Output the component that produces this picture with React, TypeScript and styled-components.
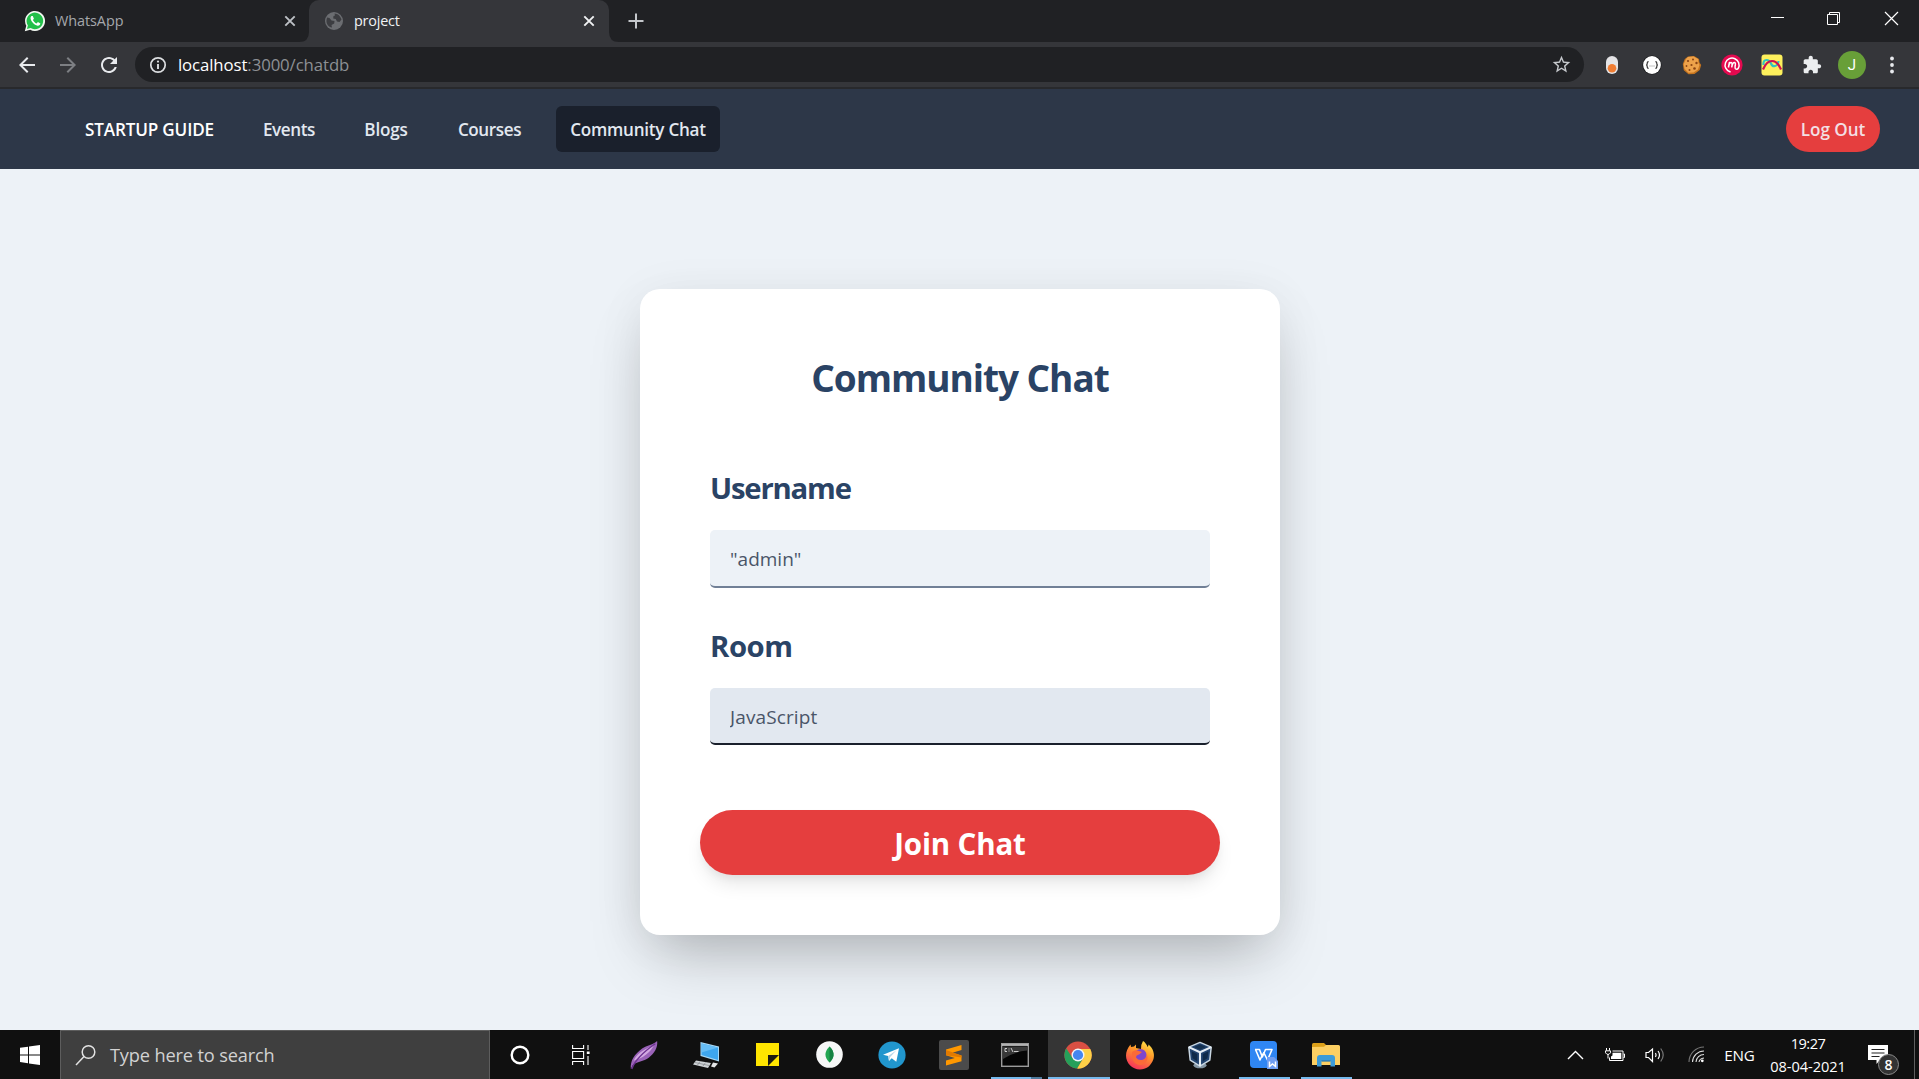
import React from "react";
import styled, { createGlobalStyle } from "styled-components";

const Global = createGlobalStyle`
  * { box-sizing: border-box; }
  html, body { margin: 0; padding: 0; overflow: hidden; }
  body { font-family: "Open Sans", "Noto Sans", sans-serif; }
  svg { display: block; flex: none; }
  button, input { font-family: inherit; border: 0; padding: 0; margin: 0; outline: none; }
`;

const Screen = styled.div`
  width: 1919px;
  height: 1079px;
  display: flex;
  flex-direction: column;
  background: #edf2f7;
`;

/* ---------- browser chrome ---------- */

const TabStrip = styled.div`
  height: 42px;
  flex: none;
  display: flex;
  background: #202124;
`;

const Tab = styled.div<{ $active?: boolean; $width: number }>`
  position: relative;
  width: ${(p) => p.$width}px;
  display: flex;
  align-items: center;
  padding: 0 ${(p) => (p.$active ? 13 : 12)}px 0 ${(p) => (p.$active ? 15 : 24)}px;
  border-radius: 10px 10px 0 0;
  background: ${(p) => (p.$active ? "#35363a" : "transparent")};
  color: ${(p) => (p.$active ? "#f1f3f4" : "#a5a8ac")};
`;

const TabFoot = styled.svg<{ $side: "left" | "right" }>`
  position: absolute;
  bottom: 0;
  ${(p) => p.$side}: -10px;
`;

const TabTitle = styled.span<{ $gap: number; $spacing: number }>`
  flex: 1;
  margin-left: ${(p) => p.$gap}px;
  font-size: 14.4px;
  line-height: 20px;
  letter-spacing: ${(p) => p.$spacing}px;
`;

const NewTab = styled.div`
  width: 54px;
  display: flex;
  align-items: center;
  justify-content: center;
`;

const WindowButtons = styled.div`
  margin-left: auto;
  padding: 11px 20px 0 0;
  display: flex;
  gap: 42px;
`;

const Toolbar = styled.div`
  height: 47px;
  flex: none;
  display: flex;
  align-items: center;
  padding: 0 15px;
  background: #35363a;
  border-bottom: 2px solid #28292c;
`;

const NavIcons = styled.div`
  display: flex;
  width: 120px;
  gap: 17px;
`;

const Omnibox = styled.div`
  width: 1450px;
  height: 35px;
  display: flex;
  align-items: center;
  padding: 0 12px 0 14px;
  border-radius: 18px;
  background: #202124;
`;

const Url = styled.span`
  flex: 1;
  margin-left: 11px;
  font-size: 16.8px;
  line-height: 24px;
  letter-spacing: -0.1px;
  color: #8d9094;
`;

const UrlHost = styled.span`
  color: #ffffff;
`;

const Extensions = styled.div`
  display: flex;
  align-items: center;
  margin-left: 16px;
  gap: 16px;
`;

const Avatar = styled.div`
  width: 28px;
  height: 28px;
  margin: 0 -2px;
  border-radius: 50%;
  background: #689f38;
  color: #ffffff;
  font: 15px/28px Roboto, sans-serif;
  text-align: center;
`;

/* ---------- site ---------- */

const NavBar = styled.nav`
  height: 80px;
  flex: none;
  display: flex;
  align-items: center;
  padding: 0 39px 0 70px;
  background: #2d3748;
`;

const NavLink = styled.a<{ $width: number; $gap?: number; $active?: boolean; $brand?: boolean; $spacing: number }>`
  width: ${(p) => p.$width}px;
  height: 46px;
  margin-left: ${(p) => p.$gap ?? 0}px;
  border-radius: 6px;
  text-align: center;
  white-space: nowrap;
  font-weight: 600;
  font-size: 17.1px;
  line-height: 47px;
  letter-spacing: ${(p) => p.$spacing}px;
  background: ${(p) => (p.$active ? "#1a202c" : "transparent")};
  color: ${(p) => (p.$brand ? "#ffffff" : "#e2e8f0")};
`;

const LogOut = styled.button`
  width: 94px;
  height: 46px;
  margin-left: auto;
  border-radius: 23px;
  background: #e53e3e;
  color: #f3dfe3;
  font-weight: 600;
  font-size: 17.1px;
  line-height: 47px;
  letter-spacing: -0.05px;
`;

const Page = styled.main`
  height: 861px;
  flex: none;
  display: flex;
  justify-content: center;
  align-items: flex-start;
  padding-top: 120px;
  overflow: hidden;
`;

const Card = styled.form`
  width: 640px;
  height: 646px;
  margin-left: 1px;
  padding: 59px 60px 0;
  display: flex;
  flex-direction: column;
  border-radius: 20px;
  background: #ffffff;
  box-shadow: 0 31px 62px -15px rgba(0, 0, 0, 0.25), 0 6px 50px rgba(0, 0, 0, 0.06);
`;

const Title = styled.h1`
  margin: 0;
  font-size: 37px;
  line-height: 60px;
  font-weight: 700;
  letter-spacing: -1.05px;
  text-align: center;
  color: #2a4365;
`;

const Field = styled.div<{ $top: number }>`
  display: flex;
  flex-direction: column;
  margin: ${(p) => p.$top}px 10px 0;
`;

const Label = styled.label<{ $spacing: number }>`
  height: 62px;
  font-size: 29.3px;
  line-height: 40px;
  font-weight: 700;
  letter-spacing: ${(p) => p.$spacing}px;
  color: #2a4365;
`;

const Input = styled.input<{ $focused?: boolean; $spacing: number }>`
  height: ${(p) => (p.$focused ? 57 : 58)}px;
  padding: 2px 20px 0;
  border-bottom: 2px solid ${(p) => (p.$focused ? "#1a202c" : "#718096")};
  border-radius: 5px;
  background: ${(p) => (p.$focused ? "#e2e8f0" : "#edf2f7")};
  color: #4a5568;
  font-size: 19px;
  letter-spacing: ${(p) => p.$spacing}px;
`;

const Join = styled.button`
  height: 65px;
  margin-top: 65px;
  border-radius: 33px;
  background: #e53e3e;
  color: #ffffff;
  font-size: 29.5px;
  font-weight: 700;
  line-height: 65px;
  padding-top: 1px;
  letter-spacing: -0.15px;
  box-shadow: 0 12px 19px -4px rgba(0, 0, 0, 0.1), 0 5px 8px -2px rgba(0, 0, 0, 0.05);
`;

/* ---------- taskbar ---------- */

const Taskbar = styled.footer`
  height: 49px;
  flex: none;
  display: flex;
  background: #101010;
  color: #ffffff;
`;

const Start = styled.div`
  width: 60px;
  display: flex;
  align-items: center;
  justify-content: center;
`;

const Search = styled.div`
  width: 430px;
  display: flex;
  align-items: center;
  padding-left: 14px;
  gap: 13px;
  background: #3f3f3f;
  border: 1px solid #5d5d5d;
  border-bottom: 0;
  color: #d2d2d2;
  font-size: 18.2px;
  letter-spacing: -0.15px;
`;

const Slot = styled.div<{ $active?: boolean; $running?: boolean; $stacked?: boolean; $nudge?: number }>`
  position: relative;
  width: 62px;
  display: flex;
  align-items: center;
  justify-content: center;
  padding-right: ${(p) => p.$nudge ?? 2}px;
  background: ${(p) => (p.$active ? "#353535" : "transparent")};
  &::after {
    content: "";
    display: ${(p) => (p.$active || p.$running ? "block" : "none")};
    position: absolute;
    bottom: 0;
    left: ${(p) => (p.$active ? 0 : 5)}px;
    right: ${(p) => (p.$active ? 0 : 6)}px;
    height: 2px;
    background: ${(p) =>
      p.$stacked ? "linear-gradient(90deg, #76b9ed 40px, #4f7a9c 40px)" : "#76b9ed"};
  }
`;

const Tray = styled.div`
  margin-left: auto;
  display: flex;
  align-items: center;
`;

const TrayIcon = styled.div<{ $width: number }>`
  width: ${(p) => p.$width}px;
  display: flex;
  justify-content: center;
`;

const Lang = styled.span`
  width: 47px;
  padding-right: 2px;
  text-align: center;
  font-size: 15.2px;
  letter-spacing: -0.2px;
`;

const Clock = styled.div`
  width: 88px;
  display: flex;
  flex-direction: column;
  align-items: center;
  font-size: 14.6px;
  line-height: 23px;
  letter-spacing: -0.05px;
`;

const Time = styled.span`
  letter-spacing: -0.5px;
`;

const Notice = styled.div`
  position: relative;
  width: 62px;
  height: 49px;
  padding: 15px 0 0 16px;
`;

const Badge = styled.span`
  position: absolute;
  left: 26px;
  top: 24px;
  width: 21px;
  height: 21px;
  border: 1px solid #8a8a8a;
  border-radius: 50%;
  background: #333333;
  font-size: 14px;
  font-weight: 600;
  line-height: 19px;
  text-align: center;
`;

const ShowDesktop = styled.div`
  width: 5px;
  height: 49px;
  border-left: 1px solid #5f5f5f;
`;

const CloseX = ({ color }: { color: string }) => (
  <svg width="14" height="14" viewBox="0 0 14 14" stroke={color} strokeWidth="1.9">
    <path d="M2.3 2.3l9.4 9.4M11.7 2.3l-9.4 9.4" />
  </svg>
);

const WhatsAppIcon = () => (
  <svg width="22" height="22" viewBox="0 0 22 22">
    <path d="M.8 21.2l1.5-5.4A10 10 0 1 1 6.2 19.7z" fill="#f2f8f2" />
    <path d="M2.9 19l1-3.6A8.3 8.3 0 1 1 6.6 18z" fill="#22c04a" />
    <path d="M7.6 6c-.6.3-1.3 1.3-1 2.8.6 2.9 3.6 6.2 7 6.9 1.5.2 2.7-.9 2.8-2.2l-2.5-1.400-1.3 1.3c-1.7-.7-2.9-1.9-3.7-3.5l1-1.2L8.8 6z" fill="#fff" />
  </svg>
);

const GlobeIcon = () => (
  <svg width="20" height="20" viewBox="0 0 20 20">
    <circle cx="10" cy="10" r="9" fill="#6b6d71" />
    <path d="M3 6.5l2.5.5 2 2.5 3 .5-.3 2.500-2.700 1.500.5 2.500C4.500 16 2 13 2.500 9zM10.500 2.500c3.500.2 6 2.700 7 6l-2 2.500-2.500-.5-1.300-2.500-2.500-.5.3-2.500 1.500-.5z" fill="#3c3d41" />
  </svg>
);

const ToolIcon = ({ d, color = "#e8eaed" }: { d: string; color?: string }) => (
  <svg width="24" height="24" viewBox="0 0 24 24" fill={color}>
    <path d={d} />
  </svg>
);

const InfoIcon = () => (
  <svg width="18" height="18" viewBox="0 0 18 18">
    <circle cx="9" cy="9" r="7.2" fill="none" stroke="#dcdee1" strokeWidth="1.7" />
    <path d="M9 8v5" stroke="#dcdee1" strokeWidth="1.9" />
    <circle cx="9" cy="5.6" r="1.1" fill="#dcdee1" />
  </svg>
);

const StarIcon = () => (
  <svg width="21" height="21" viewBox="0 0 24 24" fill="#c6c9cd">
    <path d="M22 9.240l-7.190-.62L12 2 9.190 8.630 2 9.240l5.460 4.730L5.820 21 12 17.270 18.180 21l-1.630-7.030L22 9.240zM12 15.400l-3.760 2.270 1-4.280-3.320-2.880 4.380-.38L12 6.100l1.710 4.040 4.380.38-3.320 2.880 1 4.280L12 15.400z" />
  </svg>
);

const ToggleExt = () => (
  <svg width="24" height="24" viewBox="0 0 24 24">
    <rect x="6" y="3" width="12" height="18" rx="6" fill="#e4e4e6" />
    <circle cx="12" cy="15.3" r="4.3" fill="#ef7d33" />
  </svg>
);

const BracesExt = () => (
  <svg width="24" height="24" viewBox="0 0 24 24">
    <circle cx="12" cy="12" r="9.6" fill="#17181a" />
    <circle cx="12" cy="12" r="8.9" fill="#fff" />
    <path d="M8.600 8.700q-1.400 0-1.400 1.300v.8q0 1-1 1.200 1 .2 1 1.200v.8q0 1.300 1.400 1.300M15.400 8.700q1.400 0 1.400 1.300v.8q0 1 1 1.200-1 .2-1 1.200v.8q0 1.300-1.400 1.300" fill="none" stroke="#333" strokeWidth="1.2" />
    <path d="M9.500 13h1M11.500 13h1M13.500 13h1" stroke="#888" />
  </svg>
);

const CookieExt = () => (
  <svg width="24" height="24" viewBox="0 0 24 24">
    <path d="M8 3.500l6-.5 5 3 .5 3.500 1.700 2.500-1.500 5-5.200 4-6 .2-4.700-4L2.800 11l2-5z" fill="#c6751f" />
    <path d="M8 4l5.500-.5L18 6l.5 4 1 2-1.500 4.500-4.500 3-5 .3-4-4L3.700 11 6 6z" fill="#eda24a" />
    <g fill="#8a4413">
      <circle cx="8" cy="8" r="1.1" /><circle cx="13" cy="6.500" r="1" /><circle cx="16.500" cy="10" r="1.2" />
      <circle cx="11.500" cy="12" r="1.100" /><circle cx="6.500" cy="13" r=".9" /><circle cx="14.500" cy="15.500" r="1.300" /><circle cx="9.500" cy="17" r="1" />
    </g>
  </svg>
);

const MExt = () => (
  <svg width="24" height="24" viewBox="0 0 24 24">
    <circle cx="12" cy="12" r="10.6" fill="#e5094f" />
    <path d="M10 18.800a7 7 0 1 1 8.300-3.500q-1.500 2-3 .2-.6-1 0-3.200.5-2.700-1-2.700-1.600 0-2.600 4.800 1-4.800-.6-4.800-1.700 0-2.700 4.900l1-5" fill="none" stroke="#fff" strokeWidth="1.5" strokeLinecap="round" />
  </svg>
);

const RainbowExt = () => (
  <svg width="24" height="24" viewBox="0 0 24 24" fill="none">
    <rect x="1.500" y="1.500" width="21" height="21" rx="3" fill="#fdf05c" />
    <path d="M3.500 12Q3 7 6.500 7q3 0 4.500 3.500t4 2.500q3-.5 3.500-5" stroke="#2fc4c0" strokeWidth="2.200" />
    <path d="M3 16.500Q6.500 8 12 8t9 8.500" stroke="#d0124f" strokeWidth="2.200" />
  </svg>
);

const PuzzleBox = styled.div`
  width: 24px;
  display: flex;
  justify-content: center;
  svg { width: 20px; height: 20px; }
`;

const PuzzleIcon = () => (
  <PuzzleBox>
    <ToolIcon
      color="#eceef0"
      d="M20.500 11H19V7c0-1.100-.9-2-2-2h-4V3.500C13 2.120 11.880 1 10.500 1S8 2.120 8 3.500V5H4c-1.100 0-1.990.9-1.990 2v3.800H3.500c1.490 0 2.700 1.210 2.700 2.700s-1.210 2.700-2.700 2.700H2V20c0 1.100.9 2 2 2h3.800v-1.500c0-1.490 1.210-2.700 2.700-2.700 1.490 0 2.700 1.210 2.700 2.700V22H17c1.100 0 2-.9 2-2v-4h1.500c1.380 0 2.500-1.120 2.500-2.500S21.880 11 20.500 11z"
    />
  </PuzzleBox>
);

const DotsIcon = () => (
  <svg width="24" height="24" viewBox="0 0 24 24" fill="#e8eaed">
    <circle cx="12" cy="5.500" r="1.900" /><circle cx="12" cy="12" r="1.900" /><circle cx="12" cy="18.500" r="1.900" />
  </svg>
);

const Browser = () => (
  <>
    <TabStrip>
      <Tab $width={309}>
        <WhatsAppIcon />
        <TabTitle $gap={9} $spacing={-0.05}>WhatsApp</TabTitle>
        <CloseX color="#bdc1c6" />
      </Tab>
      <Tab $active $width={300}>
        <TabFoot $side="left" width="10" height="10"><path d="M10 0v10H0Q10 10 10 0z" fill="#35363a" /></TabFoot>
        <TabFoot $side="right" width="10" height="10"><path d="M0 0v10h10Q0 10 0 0z" fill="#35363a" /></TabFoot>
        <GlobeIcon />
        <TabTitle $gap={10} $spacing={-0.2}>project</TabTitle>
        <CloseX color="#f1f3f4" />
      </Tab>
      <NewTab>
        <svg width="16" height="16" stroke="#c4c7cb" strokeWidth="2"><path d="M8 .5v15M.5 8h15" /></svg>
      </NewTab>
      <WindowButtons>
        <svg width="15" height="15" stroke="#fff"><path d="M1 6.500h13" /></svg>
        <svg width="15" height="15" stroke="#fff" fill="none"><path d="M.5 3.500h10v10h-10zM2.500 3.500v-2h10v10h-2" /></svg>
        <svg width="15" height="15" stroke="#fff" strokeWidth="1.2"><path d="M1 1l13 13M14 1L1 14" /></svg>
      </WindowButtons>
    </TabStrip>
    <Toolbar>
      <NavIcons>
        <ToolIcon d="M20 11H7.830l5.590-5.590L12 4l-8 8 8 8 1.410-1.410L7.830 13H20v-2z" />
        <ToolIcon color="#7d7f83" d="M12 4l-1.410 1.410L16.170 11H4v2h12.170l-5.580 5.590L12 20l8-8z" />
        <ToolIcon d="M17.650 6.350C16.200 4.900 14.210 4 12 4c-4.420 0-7.990 3.580-7.990 8s3.570 8 7.990 8c3.730 0 6.840-2.550 7.730-6h-2.080c-.82 2.330-3.040 4-5.650 4-3.310 0-6-2.690-6-6s2.690-6 6-6c1.660 0 3.140.69 4.220 1.780L13 11h7V4l-2.350 2.350z" />
      </NavIcons>
      <Omnibox>
        <InfoIcon />
        <Url><UrlHost>localhost</UrlHost>:3000/chatdb</Url>
        <StarIcon />
      </Omnibox>
      <Extensions>
        <ToggleExt />
        <BracesExt />
        <CookieExt />
        <MExt />
        <RainbowExt />
        <PuzzleIcon />
        <Avatar>J</Avatar>
        <DotsIcon />
      </Extensions>
    </Toolbar>
  </>
);

const Feather = () => (
  <svg width="30" height="32" viewBox="0 0 32 32">
    <path d="M2 31C1 22 6 15 14 9c5-3.500 12-4 16-8 1 7-3 13-9 18-5 4-13 4-17 8z" fill="#9a63b8" />
    <path d="M5 22c3-7 9-11 22-17-5 9-12 14-22 17z" fill="#d3a9e2" />
    <path d="M3 31C6 22 15 13 28 4" fill="none" stroke="#6c3190" strokeWidth="1.500" />
  </svg>
);

const Computer = () => (
  <svg width="30" height="28" viewBox="0 0 30 28">
    <path d="M9.500 1l18.500 4.500v15L9.500 15z" fill="#a8d8f4" />
    <path d="M10.500 2.500l16.500 4v12.500L10.500 14z" fill="#3ea6ee" />
    <path d="M10.500 2.500l16.500 4-16.500 5z" fill="#66bdf5" />
    <path d="M5 19.500l15 2.500-3 5-15-3.500z" fill="#cfd3d6" />
    <path d="M4 21.500l14 3M9 20.500l-2.500 3.500M14.500 21.500L12 25" stroke="#8a8e92" strokeWidth=".8" />
    <path d="M22 21.500l5 1-3.500 4-3.500-1z" fill="#e4e6e8" />
  </svg>
);

const StickyNote = () => (
  <svg width="23" height="23" viewBox="0 0 23 23">
    <path d="M0 0h23v12H12v11H0z" fill="#ffe500" />
    <path d="M12 12h11L12 23z" fill="#1c1a10" />
    <path d="M23 12v11H12z" fill="#ffe500" />
  </svg>
);

const Mongo = () => (
  <svg width="27" height="27" viewBox="0 0 27 27">
    <circle cx="13.500" cy="13.500" r="13.300" fill="#f6f7f7" />
    <path d="M13.500 5.500q8 8 0 16-8-8 0-16z" fill="#22a652" />
    <path d="M13.500 5.500q8 8 0 16z" fill="#158242" />
  </svg>
);

const Telegram = () => (
  <svg width="28" height="28" viewBox="0 0 28 28">
    <circle cx="14" cy="14" r="13.600" fill="#2196cd" />
    <path d="M5 13.800L21 7.300l-2.700 13.500-4.600-3.500-2.700 2.700-.8-5z" fill="#fff" />
    <path d="M10.200 15l8.300-5.700-6.300 6.700-1.200 4z" fill="#b5d5e7" />
  </svg>
);

const Sublime = () => (
  <svg width="30" height="30" viewBox="0 0 30 30">
    <rect width="30" height="30" rx="2" fill="#4b4b4b" />
    <path d="M7 9.500L22.500 5v5l-9 2.800 9 2.700v5.700L7 25.500v-5l8.800-2.600L7 15.200z" fill="#ff9800" />
    <path d="M7 10l15.500 5.500v2L7 15.200z" fill="#e27a00" />
  </svg>
);

const Terminal = () => (
  <svg width="28" height="24" viewBox="0 0 28 24">
    <rect x=".7" y=".7" width="26.600" height="22.600" fill="#050505" stroke="#9b9b9b" strokeWidth="1.400" />
    <path d="M1 2h26" stroke="#cfcfcf" strokeWidth="1.600" />
    <path d="M2 3.500h24v4Q12 9 2 16z" fill="#383838" />
    <path d="M6 5.500H4v3h2M8 5.500v1M8 7.500v1M10 5l2 4M13 8.500h4.500" fill="none" stroke="#ddd" strokeWidth=".9" />
  </svg>
);

const Chrome = () => (
  <svg width="28" height="28" viewBox="0 0 28 28">
    <circle cx="14" cy="14" r="13.600" fill="#d94f43" />
    <path d="M2.200 7.200A13.600 13.600 0 0 0 13.200 27.600L19 17.500 8.500 17z" fill="#25a05a" />
    <path d="M14 8h12.300A13.600 13.600 0 0 1 13.200 27.600L19.500 17z" fill="#fdd047" />
    <circle cx="14" cy="14" r="6.500" fill="#f2f5f8" />
    <circle cx="14" cy="14" r="5.100" fill="#4486f0" />
  </svg>
);

const Firefox = () => (
  <svg width="30" height="30" viewBox="0 0 30 30">
    <defs>
      <linearGradient id="fx" x1=".8" y1="0" x2=".3" y2="1">
        <stop offset="0" stopColor="#ffe94a" /><stop offset=".4" stopColor="#ff9a2a" /><stop offset="1" stopColor="#f5305c" />
      </linearGradient>
    </defs>
    <path d="M18 1c2 1 4 4 4.500 6q1-1 1-2.500C28 8 30 14 28.500 19 26 26 21 29.500 15 29.500 7 29.500 1 23 1 15.500 1 12 2.500 8 5.500 4.500L6 7l3-.5 2-2v3.500l5 1q0-5 2-8z" fill="url(#fx)" />
    <circle cx="15.500" cy="15" r="6" fill="#7d46cf" />
    <path d="M7 12q3-3 7-1l3 1-3 2.500q-3 .5-3 3 2 3 6 2.500 4-1 5-5c2 5-2 10-7 10S6 20 7 12z" fill="#fb6a38" />
  </svg>
);

const VirtualBox = () => (
  <svg width="28" height="30" viewBox="0 0 30 30" strokeLinejoin="round">
    <ellipse cx="15" cy="26" rx="7" ry="3.200" fill="#8496a4" />
    <path d="M15 1.500l12 5-1.500 14L15 27 4.500 20.500 3 6.500z" fill="#22446f" stroke="#c8d6e2" strokeWidth="1.600" />
    <path d="M3 6.500L15 12l12-5.500M15 12v15" fill="none" stroke="#e5edf4" strokeWidth="2.200" />
    <path d="M15 3.800l6.500 2.700L15 9.500 8.500 6.500z" fill="#14304f" />
    <path d="M6 11l6 2.800v8L7 18.500zM24 11l-6 2.800v8l5-3.300z" fill="#0f2a49" />
  </svg>
);

const Wps = () => (
  <svg width="28" height="28" viewBox="0 0 28 28">
    <rect x="0" y="0" width="27" height="27" rx="4" fill="#2f86f3" />
    <path d="M5 8.500h4.500l2.800 7.500 3.200-7.500H22L17.500 19l-4-8M5.500 8.500l4.500 10.500 3-6.500" fill="none" stroke="#fff" strokeWidth="1.600" strokeLinejoin="round" />
    <path d="M17 16h7l4 4v8H17z" fill="#6e9df2" />
    <path d="M19.500 20.500v5l3-2.500 3 2.500v-5" fill="none" stroke="#fff" strokeWidth="1.500" />
  </svg>
);

const Folder = () => (
  <svg width="28" height="24" viewBox="0 0 28 24">
    <path d="M0 1.500Q0 0 1.500 0H12l2 2v3H0z" fill="#dca019" />
    <path d="M0 4l12-.2L14 2h12.500q1.500 0 1.500 1.500V22H0z" fill="#fccf62" />
    <path d="M5 23.500V15q0-3 3-3h12q3 0 3 3v8.500h-4.500V18h-9v5.500z" fill="#3c9bd8" />
    <path d="M9.500 18h9" stroke="#2475ad" strokeWidth="1.200" />
  </svg>
);

const TaskView = () => (
  <svg width="18" height="20" viewBox="0 0 18 20" fill="none" stroke="#fff" strokeWidth="1.100">
    <path d="M.600 0v3.500h11V0M.600 6.500h11v7h-11zM.600 20v-3.500h11V20M16 0v5M16 11v9" />
    <path d="M14.800 6.500h2.800v2.500h-2.800z" fill="#fff" stroke="none" />
  </svg>
);

const Bar = () => (
  <Taskbar>
    <Start>
      <svg width="20" height="20" viewBox="0 0 20 20" fill="#fff">
        <path d="M0 2.800L8 1.700v7.700H0zM9 1.500L20 0v9.400H9zM0 10.400h8v7.800l-8-1.100zM9 10.400h11V20L9 18.400z" />
      </svg>
    </Start>
    <Search>
      <svg width="22" height="22" viewBox="0 0 22 22" fill="none" stroke="#e3e3e3" strokeWidth="1.500">
        <circle cx="13.500" cy="8" r="6.300" /><path d="M9 12.500L1 21" />
      </svg>
      Type here to search
    </Search>
    <Slot><svg width="20" height="20"><circle cx="10" cy="10" r="8.300" fill="none" stroke="#fff" strokeWidth="2.400" /></svg></Slot>
    <Slot $nudge={5}><TaskView /></Slot>
    <Slot><Feather /></Slot>
    <Slot><Computer /></Slot>
    <Slot $nudge={3}><StickyNote /></Slot>
    <Slot $nudge={3}><Mongo /></Slot>
    <Slot><Telegram /></Slot>
    <Slot><Sublime /></Slot>
    <Slot $running $stacked $nudge={4}><Terminal /></Slot>
    <Slot $active><Chrome /></Slot>
    <Slot><Firefox /></Slot>
    <Slot $nudge={6}><VirtualBox /></Slot>
    <Slot $running><Wps /></Slot>
    <Slot $running $nudge={3}><Folder /></Slot>
    <Tray>
      <TrayIcon $width={40}>
        <svg width="17" height="10" fill="none" stroke="#fff" strokeWidth="1.400"><path d="M1 9l7.500-7.500L16 9" /></svg>
      </TrayIcon>
      <TrayIcon $width={40}>
        <svg width="20" height="14" viewBox="0 0 20 14" fill="none" stroke="#fff">
          <path d="M7.500 3h10.500v9.500H4.500V9.500" />
          <path d="M7.500 4.800h8.800V11H6V8.500l1.500-1z" fill="#fff" stroke="none" />
          <path d="M18.500 6h1v3.500h-1" />
          <path d="M1.500 0v2.500M4.500 0v2.500M.5 2.800h5v2l-1.500 1.500h-2L.5 4.800zM3 6.500v4" />
        </svg>
      </TrayIcon>
      <TrayIcon $width={40}>
        <svg width="21" height="18" viewBox="0 0 21 18" fill="none" stroke="#fff" strokeWidth="1.200">
          <path d="M1 6.500h2.500L7.500 3v12.500l-4-4H1z" /><path d="M10.500 7q1.200 2 0 4M13 5q3 4 0 8" />
          <path d="M15.700 2.500q5 6.500 0 13" stroke="#777" />
        </svg>
      </TrayIcon>
      <TrayIcon $width={42}>
        <svg width="17" height="17" viewBox="0 0 17 17" fill="none" stroke="#ddd" strokeWidth="1.100">
          <path d="M1 16A15 15 0 0 1 16 1" stroke="#777" /><path d="M4.500 16A11.500 11.500 0 0 1 16 5M8 16a8 8 0 0 1 8-7.500" />
          <path d="M11 16q.5-3.500 5-4" /><circle cx="14.300" cy="14.800" r="1.400" fill="#fff" stroke="none" />
        </svg>
      </TrayIcon>
      <Lang>ENG</Lang>
      <Clock><Time>19:27</Time><span>08-04-2021</span></Clock>
      <Notice>
        <svg width="20" height="20" viewBox="0 0 20 20">
          <path d="M0 0h20v15h-8l-3.500 4v-4H0z" fill="#fff" /><path d="M3.500 4.500h13M3.500 8h13M3.500 11.500h8" stroke="#222" strokeWidth="1.200" />
        </svg>
        <Badge>8</Badge>
      </Notice>
      <ShowDesktop />
    </Tray>
  </Taskbar>
);

export default function App() {
  return (
    <Screen>
      <Global />
      <Browser />
      <NavBar>
        <NavLink $brand $width={159} $spacing={-0.15}>STARTUP GUIDE</NavLink>
        <NavLink $width={80} $gap={20} $spacing={-0.4}>Events</NavLink>
        <NavLink $width={74} $gap={20} $spacing={-0.2}>Blogs</NavLink>
        <NavLink $width={93} $gap={20} $spacing={-0.4}>Courses</NavLink>
        <NavLink $active $width={164} $gap={20} $spacing={-0.25}>Community Chat</NavLink>
        <LogOut>Log Out</LogOut>
      </NavBar>
      <Page>
        <Card>
          <Title>Community Chat</Title>
          <Field $top={60}>
            <Label $spacing={-1.2}>Username</Label>
            <Input readOnly defaultValue={'"admin"'} $spacing={0} />
          </Field>
          <Field $top={38}>
            <Label $spacing={-0.45}>Room</Label>
            <Input readOnly $focused defaultValue="JavaScript" $spacing={0.12} />
          </Field>
          <Join type="button">Join Chat</Join>
        </Card>
      </Page>
      <Bar />
    </Screen>
  );
}
